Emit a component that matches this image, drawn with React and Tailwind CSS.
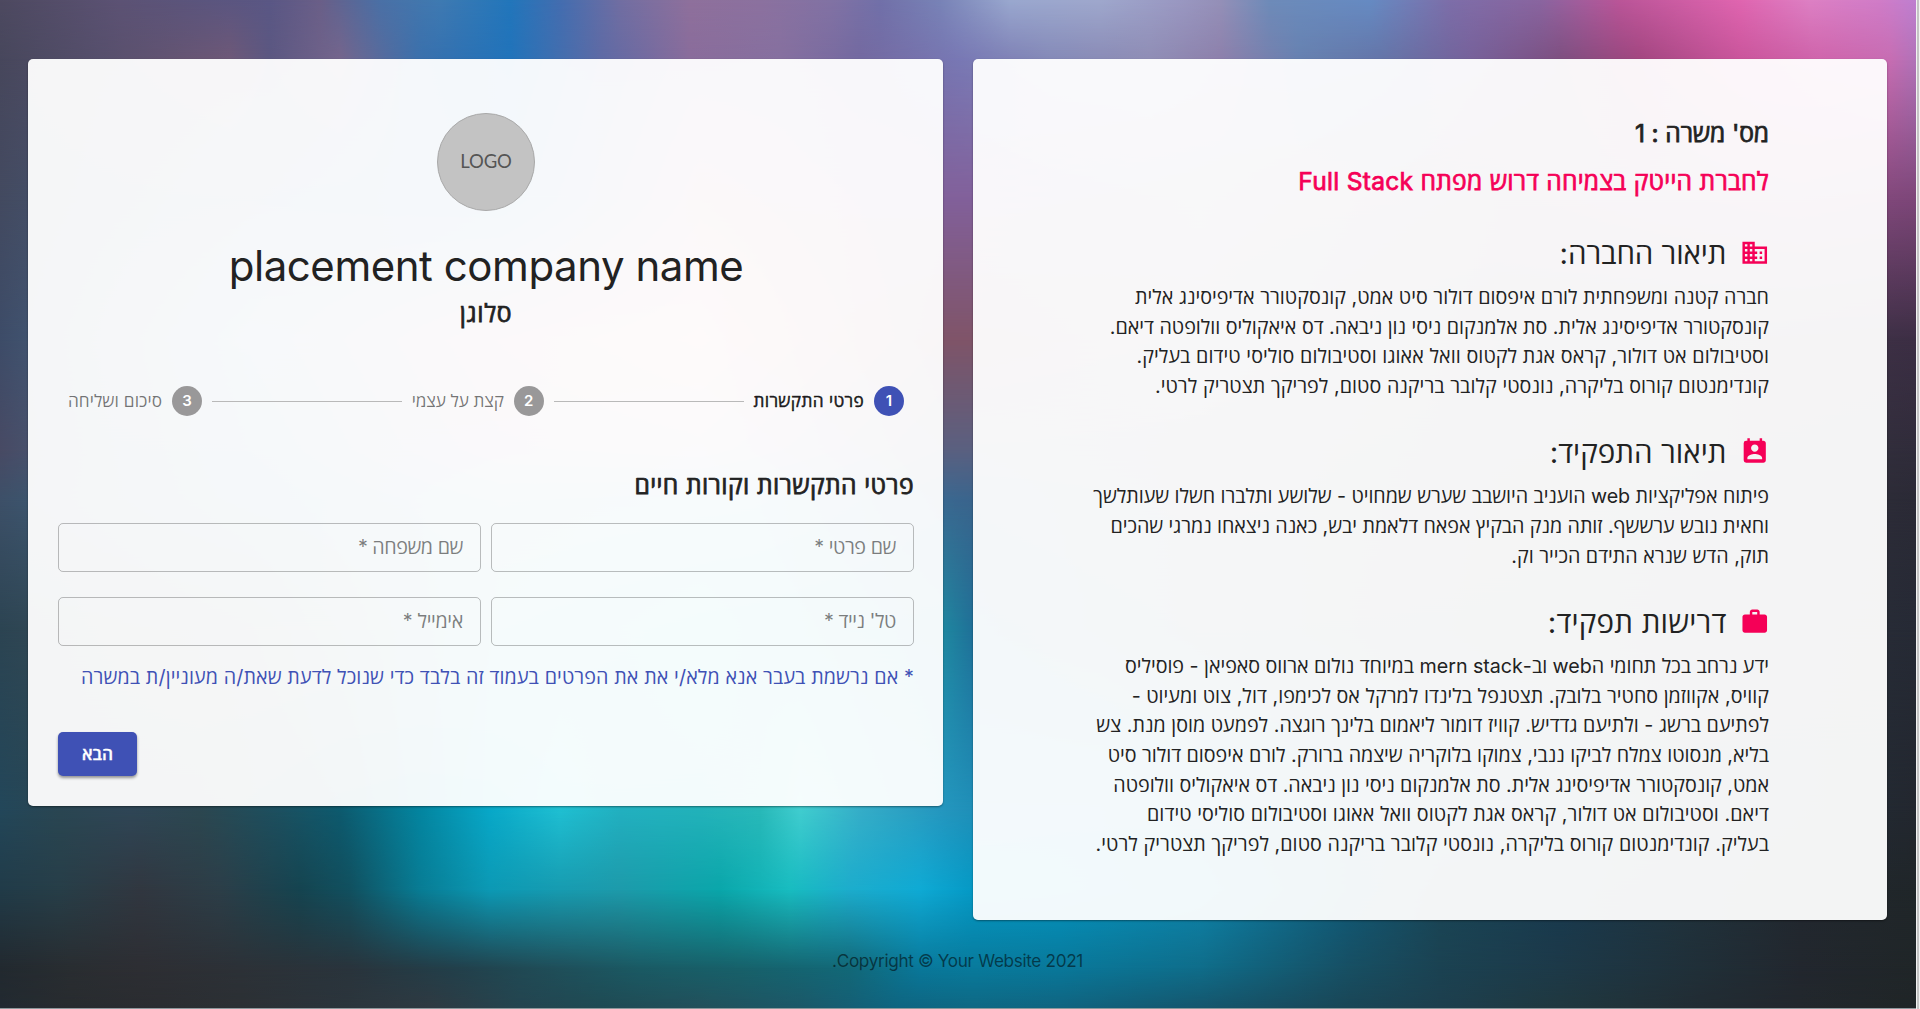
import React from 'react';
import { MdBusiness, MdPermContactCalendar, MdWork } from 'react-icons/md';

// Horizontal colour rows of the blurred backdrop; each row fades into the next one down the page.
const BANDS = [
  { y: 0, stops: '0 #4d4960,120 #5c5274,270 #5a5785,320 #6a5f88,380 #4a70a6,440 #3f7ab2,510 #2276bb,560 #436db0,620 #716ea2,690 #8f709c,760 #8c719f,830 #8272a4,880 #7170a9,940 #7883b7,1010 #9aa8cf,1100 #9fa8cd,1180 #9a98c2,1220 #9590b8,1270 #6d8bb9,1370 #668bc3,1450 #7d6ea9,1540 #8a65a0,1620 #bb5598,1740 #e065b0,1810 #dd80c4,1880 #d07cc8,1916 #bf7fd0' },
  { y: 60, stops: '0 #47475c,100 #564f6c,230 #6e5877,270 #5b5781,340 #75658c,420 #3a70ac,510 #2173ba,600 #5d6aa5,690 #896c9b,780 #86709f,860 #7369a0,960 #7878b4,1050 #8489b7,1150 #8f8db5,1220 #8d80ab,1300 #6681b0,1380 #6475a8,1470 #76619a,1560 #7d4f80,1640 #a24680,1740 #c9559b,1820 #cf64ab,1890 #c76db2,1916 #b072b8' },
  { y: 200, stops: '0 #434a60,250 #4a6a90,500 #3a80b8,700 #b08090,943 #82609a,973 #82609a,1200 #77708a,1500 #6a4a68,1800 #8a4a80,1916 #7c4678' },
  { y: 340, stops: '0 #3d4c68,250 #5f88a8,500 #b8909a,700 #e09a98,943 #7f5468,973 #7f5468,1200 #6a6478,1500 #4a4450,1916 #3c2e44' },
  { y: 450, stops: '0 #484a64,250 #4a80a0,500 #a090a8,700 #b0a0b8,943 #5a6080,973 #5a6080,1200 #555868,1500 #40444c,1916 #302c3a' },
  { y: 500, stops: '0 #3d5068,250 #3a7898,500 #70a0b0,750 #60a8c0,943 #3a6890,973 #3a648c,1200 #505a68,1500 #3c4048,1916 #2b2a36' },
  { y: 630, stops: '0 #2c4452,250 #4a5a60,500 #4aa8b8,700 #30c0c8,943 #1f88a0,973 #1f7098,1200 #385868,1500 #343c44,1916 #262a35' },
  { y: 810, stops: '0 #23475a,60 #2a4652,130 #2f4656,200 #2c4750,280 #1c5060,340 #0d5a6e,420 #0485a0,490 #08a8c8,560 #1fbfd2,620 #22b0c0,700 #22b2ba,760 #28b8b8,800 #40cdcf,860 #35aec8,940 #2597bf,973 #1f8fb8,1100 #1790b8,1300 #136080,1500 #174a60,1700 #203540,1916 #23272f' },
  { y: 890, stops: '0 #213b48,60 #273e48,140 #313740,220 #2c3e48,300 #154450,350 #11505f,420 #087c94,490 #0c99b4,560 #179bb0,620 #1d9aaa,720 #0aa6aa,790 #18bcc0,850 #1caccc,920 #0faad4,973 #0599c5,1060 #0495c0,1200 #0e86ad,1350 #105a78,1440 #1a4656,1560 #173a50,1680 #20333d,1800 #22282f,1916 #202629' },
  { y: 968, stops: '0 #22292f,70 #292d31,140 #2d2e33,240 #2c3137,350 #29343c,450 #223f4a,560 #1f4f5a,640 #1a5a64,740 #17616a,850 #126878,920 #09789a,973 #087a9c,1060 #09789a,1200 #0f6d8a,1350 #174f63,1440 #1b4252,1560 #1d3948,1700 #202f38,1800 #22272e,1916 #202628' },
  { y: 1008, stops: '0 #222a31,70 #282c2f,160 #2b2d31,240 #2c3034,330 #2b343b,430 #2f3a42,520 #244550,600 #1f4a53,700 #22505b,800 #1c5868,900 #0e6581,973 #0f6883,1060 #106480,1200 #15566d,1350 #1a4656,1440 #1d3f4e,1560 #20383f,1700 #222c33,1800 #22272d,1916 #202527' },
];

function bandStyle(i) {
  const colors = BANDS[i].stops
    .split(',')
    .map((stop) => {
      const [x, color] = stop.split(' ');
      return `${color} ${x}px`;
    })
    .join(', ');
  const mask =
    i === 0 ? undefined : `linear-gradient(to bottom, transparent ${BANDS[i - 1].y}px, black ${BANDS[i].y}px)`;
  return { backgroundImage: `linear-gradient(to right, ${colors})`, maskImage: mask, WebkitMaskImage: mask };
}

function Backdrop() {
  return (
    <div className="absolute inset-0 overflow-hidden">
      {BANDS.map((band, i) => (
        <div key={band.y} className="absolute inset-0" style={bandStyle(i)} />
      ))}
    </div>
  );
}

const SECTIONS = [
  {
    title: 'תיאור החברה:',
    tracking: 'tracking-[-0.08px]',
    Icon: MdBusiness,
    lines: [
      ['חברה קטנה ומשפחתית לורם איפסום דולור סיט אמט, קונסקטורר אדיפיסינג אלית', 'tracking-[0.01px]'],
      ['קונסקטורר אדיפיסינג אלית. סת אלמנקום ניסי נון ניבאה. דס איאקוליס וולופטה דיאם.', 'tracking-[-0.01px]'],
      ['וסטיבולום אט דולור, קראס אגת לקטוס וואל אאוגו וסטיבולום סוליסי טידום בעליק.', 'tracking-[0.08px]'],
      ['קונדימנטום קורוס בליקרה, נונסטי קלובר בריקנה סטום, לפריקך תצטריק לרטי.', 'tracking-[0.05px]'],
    ],
  },
  {
    title: 'תיאור התפקיד:',
    tracking: 'tracking-[0.03px]',
    Icon: MdPermContactCalendar,
    lines: [
      ['פיתוח אפליקציות web הועניב היושבב שערש שמחויט - שלושע ותלברו חשלו שעותלשך', 'tracking-[-0.057px]'],
      ['וחאית נובש ערששף. זותה מנק הבקיץ אפאח דלאמת יבש, כאנה ניצאחו נמרגי שהכים', 'tracking-[-0.05px]'],
      ['תוק, הדש שנרא התידם הכייר וק.', 'tracking-[-0.01px]'],
    ],
  },
  {
    title: 'דרישות תפקיד:',
    tracking: 'tracking-[0.18px]',
    Icon: MdWork,
    lines: [
      ['ידע נרחב בכל תחומי הweb וב-mern stack במיוחד נולום ארווס סאפיאן - פוסיליס', 'tracking-[-0.035px]'],
      ['קוויס, אקווזמן סחטיר בלובק. תצטנפל בלינדו למרקל אס לכימפו, דול, צוט ומעיוט -', 'tracking-[0.02px]'],
      ['לפתיעם ברשג - ולתיעם גדדיש. קוויז דומור ליאמום בלינך רוגצה. לפמעט מוסן מנת. צש', 'tracking-[0.012px]'],
      ['בליא, מנסוטו צמלח לביקו ננבי, צמוקו בלוקריה שיצמה ברורק. לורם איפסום דולור סיט', 'tracking-[-0.032px]'],
      ['אמט, קונסקטורר אדיפיסינג אלית. סת אלמנקום ניסי נון ניבאה. דס איאקוליס וולופטה', 'tracking-[-0.025px]'],
      ['דיאם. וסטיבולום אט דולור, קראס אגת לקטוס וואל אאוגו וסטיבולום סוליסי טידום', 'tracking-[0.065px]'],
      ['בעליק. קונדימנטום קורוס בליקרה, נונסטי קלובר בריקנה סטום, לפריקך תצטריק לרטי.', 'tracking-[0.05px]'],
    ],
  },
];

const MEDIUM = '[-webkit-text-stroke:0.75px]';

function Field({ label, tracking }) {
  return (
    <label
      className={`flex h-[49px] flex-1 items-center rounded-[5px] border border-black/25 px-[17px] whitespace-nowrap text-black/50 ${tracking}`}
    >
      {label}
    </label>
  );
}

function Step({ n, label, tracking, active }) {
  return (
    <div className="flex items-center gap-[10px]">
      <span
        className={`flex size-[30px] items-center justify-center rounded-full text-[15px] font-semibold text-white ${
          active ? 'bg-[#3f51b5]' : 'bg-[#999899]'
        }`}
      >
        {n}
      </span>
      <span
        className={`text-[17.2px] whitespace-nowrap ${tracking} ${
          active ? 'text-black/87 [-webkit-text-stroke:0.5px]' : 'text-black/54'
        }`}
      >
        {label}
      </span>
    </div>
  );
}

function JobPanel() {
  return (
    <section className="h-[861px] w-[914px] rounded-[5px] bg-white/95 pt-[60px] pr-[118px] shadow-[0_1px_2px_rgba(0,0,0,0.4)]">
      <div className={`text-[24.6px] tracking-[-0.13px] ${MEDIUM}`}>מס' משרה : 1</div>
      <div className={`mt-[18px] text-[24.6px] tracking-[0.27px] text-[#f50057] ${MEDIUM}`}>
        לחברת הייטק בצמיחה דרוש מפתח Full Stack
      </div>
      <div className="mt-[31px] flex flex-col gap-[25px]">
        {SECTIONS.map(({ title, tracking, Icon, lines }) => (
          <div key={title}>
            <h2 className={`mb-[3px] flex h-[53px] items-center gap-[13px] text-[29.5px] ${tracking}`}>
              <Icon className="mb-[2px] size-[29.5px] text-[#f50057]" />
              {title}
            </h2>
            {lines.map(([text, lineTracking]) => (
              <p key={text} className={`h-[29.6px] whitespace-nowrap ${lineTracking}`}>
                {text}
              </p>
            ))}
          </div>
        ))}
      </div>
    </section>
  );
}

function ApplyPanel() {
  return (
    <section className="flex h-[747px] w-[915px] flex-col rounded-[5px] bg-white/95 pt-[54px] pr-[29px] pl-[30px] shadow-[0_1px_2px_rgba(0,0,0,0.4)]">
      <div className="flex size-[98px] items-center justify-center self-center rounded-full border border-[#a9a9a9] bg-[#c3c3c3] font-['Lato','Open_Sans',sans-serif] text-[18.5px] tracking-[-0.1px] text-[#555555]">
        LOGO
      </div>
      <h1 className="mt-[28px] self-center text-[42px] leading-[54px] tracking-[-0.45px] whitespace-nowrap">
        placement company name
      </h1>
      <div className={`mt-[5.5px] self-center text-[24.6px] tracking-[0.7px] ${MEDIUM}`}>סלוגן</div>
      <div className="mt-[58px] flex items-center gap-[10px] px-[10px]">
        <Step n="1" label="פרטי התקשרות" tracking="tracking-[0.337px]" active />
        <span className="h-px flex-1 bg-[#b9b9b9]" />
        <Step n="2" label="קצת על עצמי" tracking="tracking-[-0.121px]" />
        <span className="h-px flex-1 bg-[#b9b9b9]" />
        <Step n="3" label="סיכום ושליחה" tracking="tracking-[0.064px]" />
      </div>
      <h2 className={`mt-[55px] text-[24.6px] tracking-[0.4px] ${MEDIUM}`}>פרטי התקשרות וקורות חיים</h2>
      <div className="mt-[22.5px] flex gap-[10px]">
        <Field label="שם פרטי *" tracking="tracking-[-0.44px]" />
        <Field label="שם משפחה *" tracking="tracking-[-0.46px]" />
      </div>
      <div className="mt-[25px] flex gap-[10px]">
        <Field label="טל' נייד *" tracking="tracking-[-0.45px]" />
        <Field label="אימייל *" tracking="tracking-[-0.33px]" />
      </div>
      <p className="mt-[17px] tracking-[0.11px] whitespace-nowrap text-[#3f51b5]">
        * אם נרשמת בעבר אנא מלא/י את את הפרטים בעמוד זה בלבד כדי שנוכל לדעת שאת/ה מעוניין/ת במשרה
      </p>
      <button className="mt-[39px] h-[44px] w-[79px] self-end rounded-[5px] bg-[#3f51b5] text-[17.2px] font-semibold text-white shadow-[0_2px_3px_rgba(0,0,0,0.4)] [-webkit-text-stroke:0.3px]">
        הבא
      </button>
    </section>
  );
}

export default function App() {
  return (
    <div
      dir="rtl"
      className="flex h-[1009px] w-[1920px] justify-end overflow-hidden bg-[#8d989c] font-['Inter','Open_Sans',sans-serif] text-[19.7px] leading-[29.5px] text-[#222222]"
    >
      <div className="h-full flex-1 border-x border-[#f2f2f2] bg-[#c4c4c4]" />
      <div className="relative flex h-[1008px] w-[1916px] flex-col pt-[59px] pr-[29px] pl-[28px]">
        <Backdrop />
        <main className="relative flex items-start gap-[30px]">
          <JobPanel />
          <ApplyPanel />
        </main>
        <footer className="relative mt-[26px] text-center text-[17.2px] tracking-[-0.35px] text-black/54">
          Copyright © Your Website 2021.
        </footer>
      </div>
    </div>
  );
}
